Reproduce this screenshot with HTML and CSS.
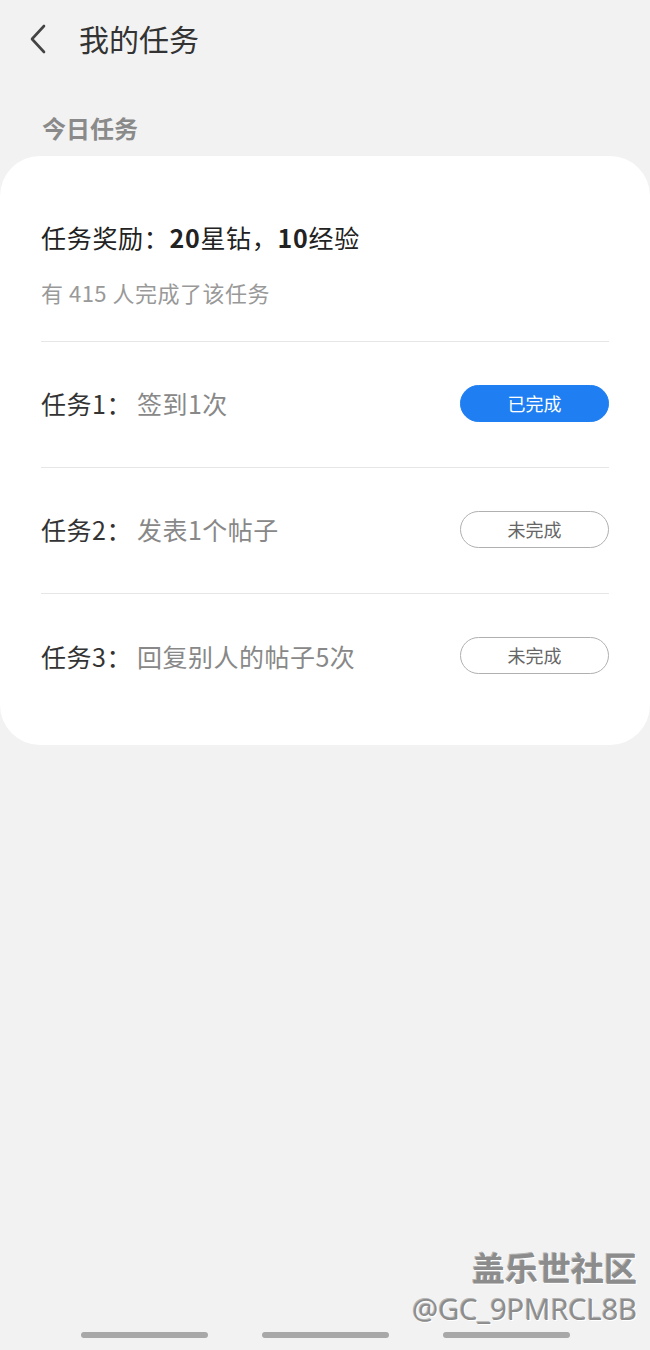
FILE: index.html
```html
<!DOCTYPE html>
<html lang="zh-CN">
<head>
    <meta charset="UTF-8">
    <meta name="viewport" content="width=device-width, initial-scale=1.0">
    <title>我的任务</title>
    <link rel="stylesheet" href="styles.css">
</head>
<body>

    <div class="header">
        <svg class="back" width="24" height="32" viewBox="0 0 24 32">
            <path d="M17 3 L5 16 L17 29" fill="none" stroke="#444" stroke-width="2.6" stroke-linecap="round" stroke-linejoin="round"/>
        </svg>
        <h1>我的任务</h1>
    </div>

    <div class="section-title">今日任务</div>

    <div class="card">
        <div class="reward">
            <div class="reward-title">任务奖励：<b>20</b>星钻，<b>10</b>经验</div>
            <div class="reward-sub">有 415 人完成了该任务</div>
        </div>

        <div class="task">
            <div class="task-name">任务1：<span>签到1次</span></div>
            <div class="btn done">已完成</div>
        </div>
        <div class="task">
            <div class="task-name">任务2：<span>发表1个帖子</span></div>
            <div class="btn">未完成</div>
        </div>
        <div class="task">
            <div class="task-name">任务3：<span>回复别人的帖子5次</span></div>
            <div class="btn">未完成</div>
        </div>
    </div>

    <div class="watermark">
        <div class="wm-big">盖乐世社区</div>
        <div class="wm-small">@GC_9PMRCL8B</div>
    </div>

    <div class="navbar">
        <span></span>
        <span></span>
        <span></span>
    </div>

</body>
</html>
```

FILE: styles.css
```css
body {
    font-family: "Noto Sans CJK SC", "Noto Sans", Roboto, sans-serif;
    background-color: #f2f2f2;
    margin: 0;
    height: 1350px;
    position: relative;
    overflow: hidden;
}
.header {
    display: flex;
    align-items: center;
    height: 76px;
    padding-left: 27px;
}
.header h1 {
    margin: 0 0 0 28px;
    font-size: 30px;
    font-weight: 400;
    color: #333;
}
.back {
    display: block;
    margin-top: 2px;
}
.section-title {
    padding: 32px 42px 0;
    height: 48px;
    line-height: 40px;
    font-size: 24px;
    font-weight: 700;
    color: #8a8a8a;
}
.card {
    background: white;
    border-radius: 40px;
    padding: 0 41px 25px;
}
.reward {
    padding: 64px 0 35px;
    border-bottom: 1px solid #e6e6e6;
}
.reward-title {
    font-size: 25px;
    line-height: 34px;
    letter-spacing: 0.7px;
    color: #222;
}
.reward-title b {
    font-weight: 700;
}
.reward-sub {
    margin-top: 24px;
    font-size: 22px;
    line-height: 28px;
    letter-spacing: 0.5px;
    color: #999;
}
.task {
    display: flex;
    align-items: center;
    justify-content: space-between;
    box-sizing: border-box;
    height: 126px;
    padding-bottom: 3px;
    border-bottom: 1px solid #e6e6e6;
}
.task:last-child {
    border-bottom: none;
}
.task-name {
    font-size: 25px;
    letter-spacing: 0.5px;
    color: #333;
}
.task-name span {
    margin-left: 5px;
    color: #888;
}
.btn {
    width: 147px;
    height: 35px;
    line-height: 35px;
    text-align: center;
    font-size: 18px;
    color: #666;
    border: 1px solid #b0b0b0;
    border-radius: 19px;
}
.btn.done {
    background-color: #1f7ff2;
    border-color: #1f7ff2;
    color: white;
}
.watermark {
    position: absolute;
    right: 13px;
    top: 1245px;
    text-align: right;
    color: #8c8c8c;
    text-shadow: 1px 1px 0 #fff, -1px -1px 0 #b5b5b5;
}
.wm-big {
    font-size: 33px;
    font-weight: 700;
    line-height: 44px;
}
.wm-small {
    font-family: "Open Sans", "Liberation Sans", sans-serif;
    font-size: 29px;
    line-height: 40px;
}
.navbar {
    position: absolute;
    left: 0;
    right: 0;
    top: 1332px;
    display: flex;
    justify-content: center;
    gap: 54px;
}
.navbar span {
    width: 127px;
    height: 6px;
    border-radius: 3px;
    background: #a8a8a8;
}
```
